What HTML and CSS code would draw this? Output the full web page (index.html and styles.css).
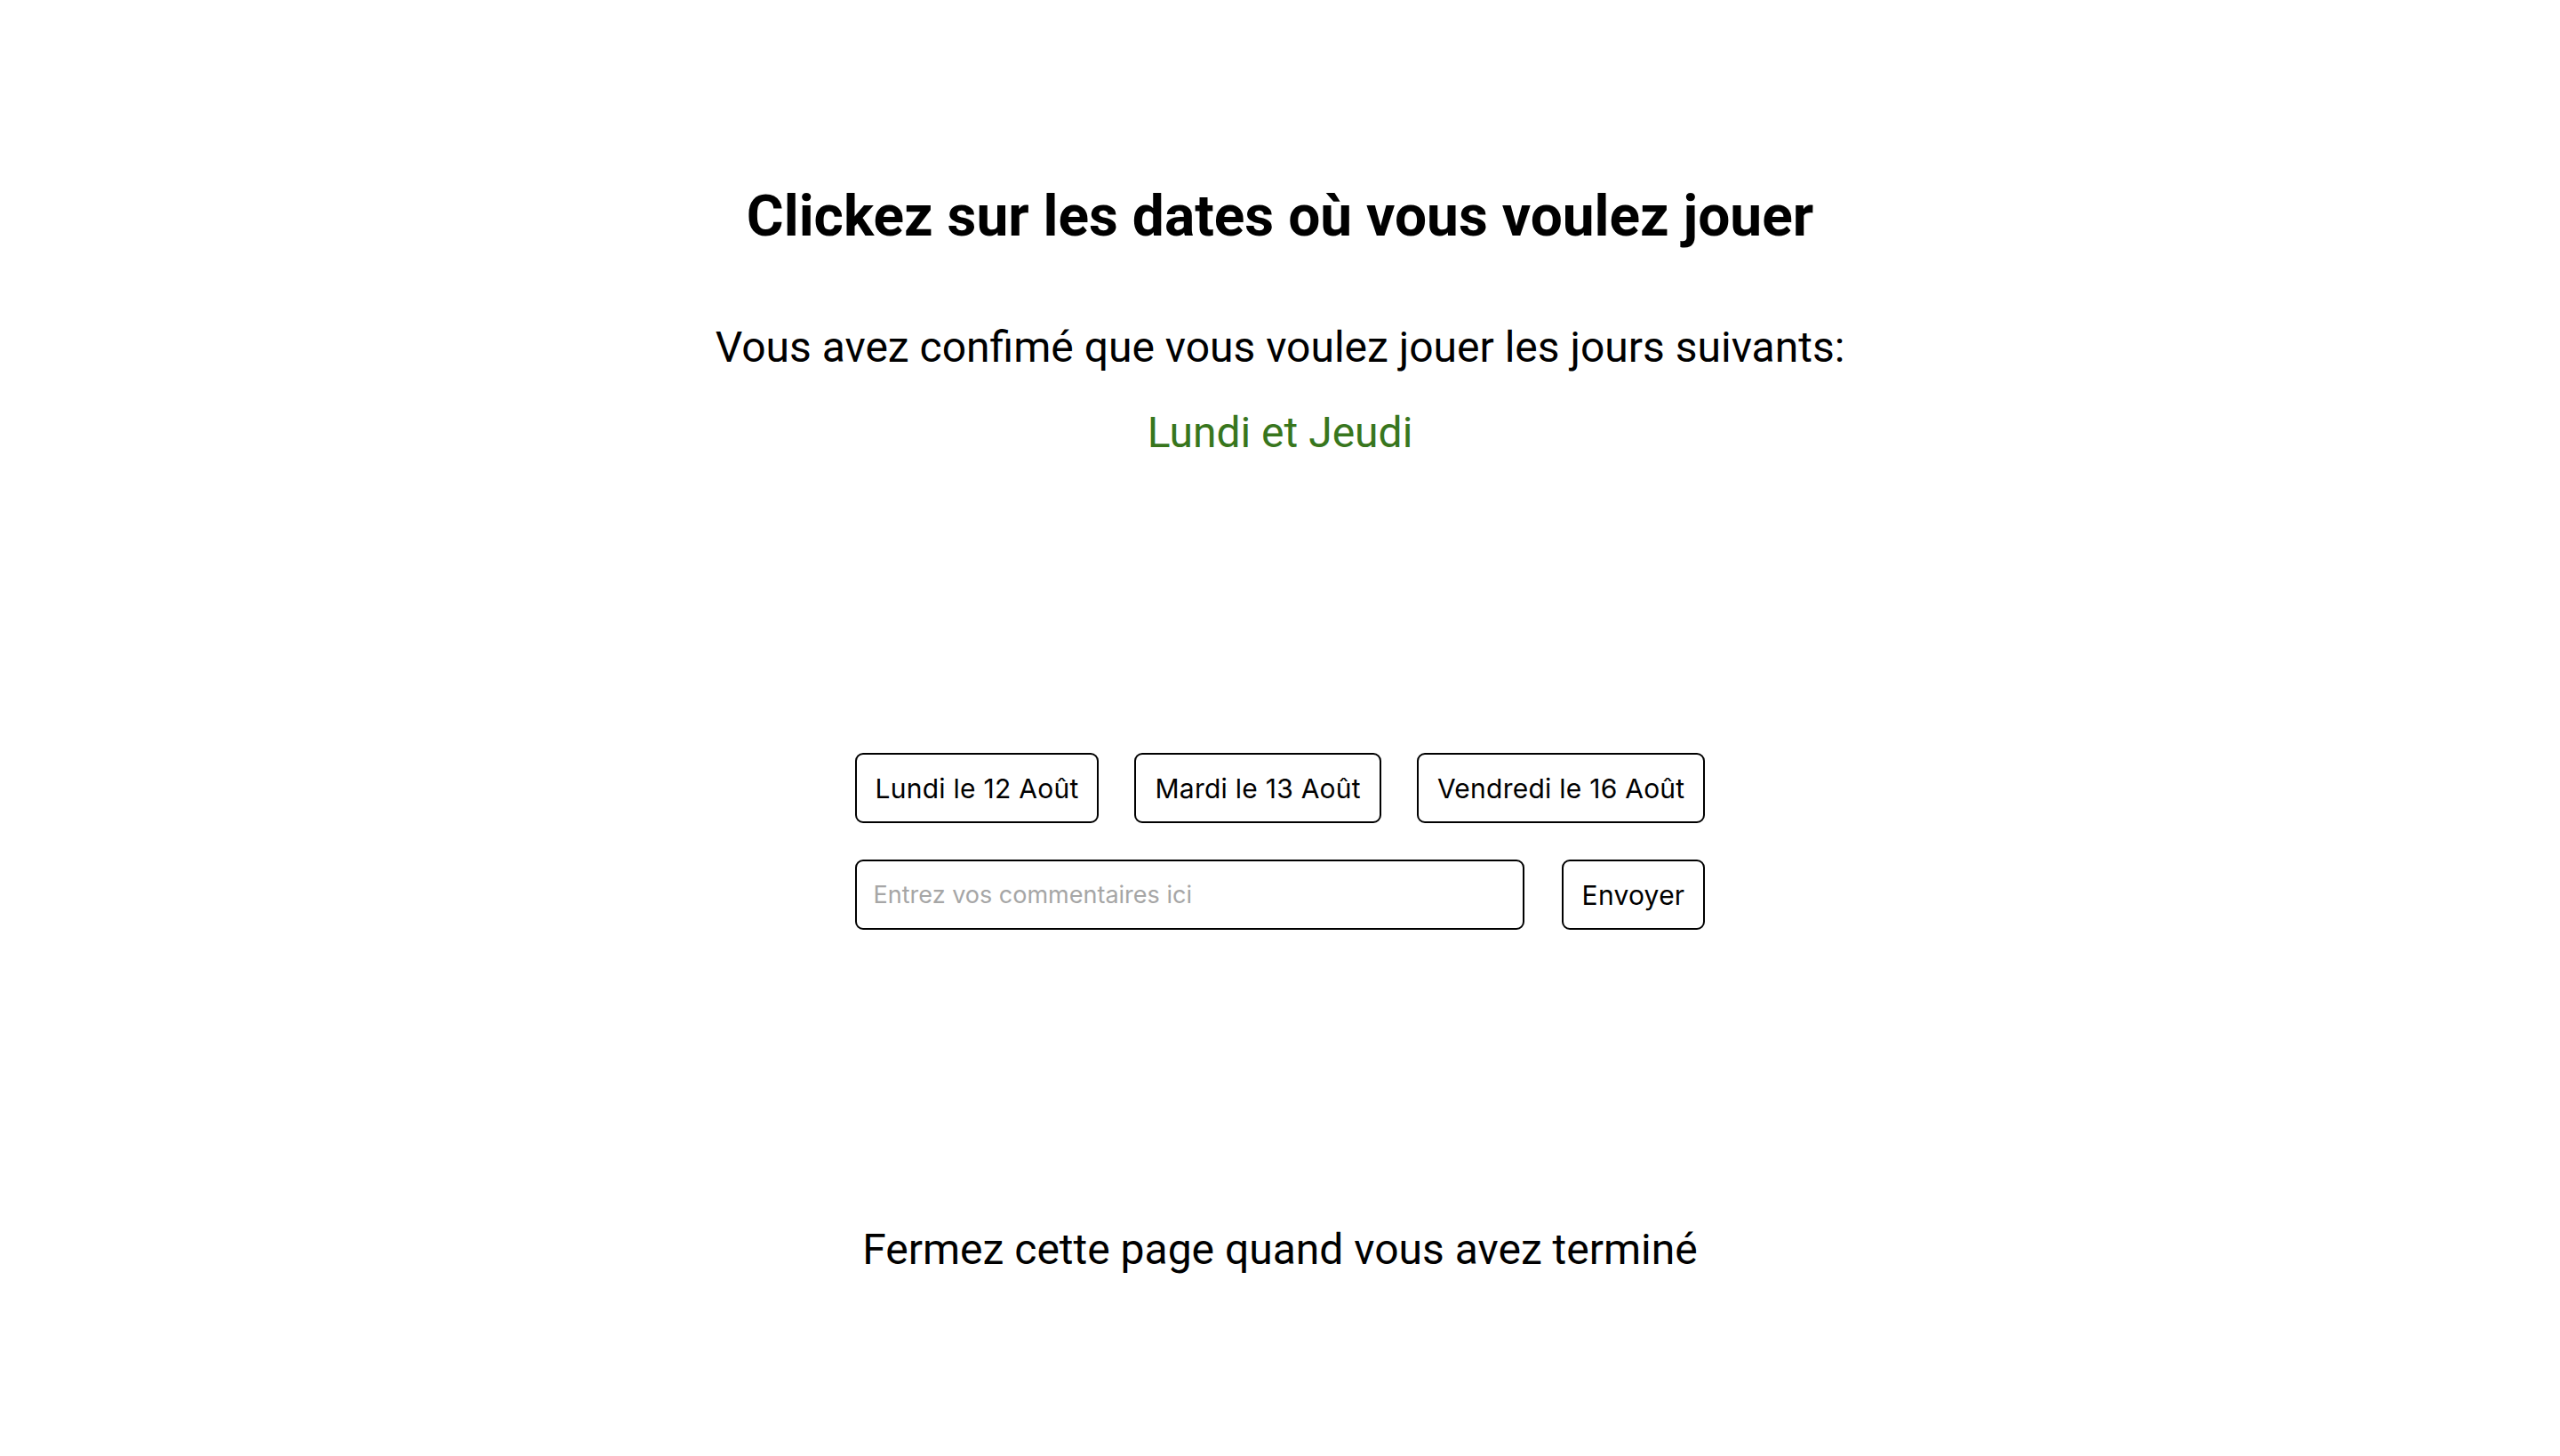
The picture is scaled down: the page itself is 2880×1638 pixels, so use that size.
FILE: index.html
```html
<!DOCTYPE html>
<html lang="fr">
<head>
<meta charset="utf-8">
<title>Dates</title>
<link rel="stylesheet" href="styles.css">
</head>
<body>
<main class="page">
  <h1 class="title">Clickez sur les dates où vous voulez jouer</h1>
  <p class="confirm">Vous avez confimé que vous voulez jouer les jours suivants:</p>
  <p class="days">Lundi et Jeudi</p>
  <div class="panel">
    <div class="dates">
      <button class="btn">Lundi le 12 Août</button>
      <button class="btn">Mardi le 13 Août</button>
      <button class="btn">Vendredi le 16 Août</button>
    </div>
    <form class="comment">
      <input class="field" type="text" placeholder="Entrez vos commentaires ici">
      <button class="btn" type="button">Envoyer</button>
    </form>
  </div>
  <p class="footer">Fermez cette page quand vous avez terminé</p>
</main>
</body>
</html>
```

FILE: styles.css
```css
html, body {
  margin: 0;
  padding: 0;
  background: #ffffff;
}

.page {
  display: flex;
  flex-direction: column;
  align-items: center;
  padding-top: 204px;
  font-family: Roboto, "Liberation Sans", sans-serif;
  color: #000;
}

.title {
  margin: 0;
  font-size: 64px;
  line-height: 80px;
  font-weight: 700;
}

.confirm {
  margin: 79px 0 0;
  font-size: 48px;
  line-height: 56px;
  font-weight: 400;
}

.days {
  margin: 40px 0 0;
  font-size: 48px;
  line-height: 56px;
  color: #38761d;
}

.panel {
  margin-top: 332px;
  display: flex;
  flex-direction: column;
  gap: 41px;
}

.dates {
  display: flex;
  gap: 40px;
}

.comment {
  display: flex;
  gap: 42px;
  margin: 0;
}

.btn {
  box-sizing: border-box;
  height: 79px;
  padding: 0 21px;
  border: 2px solid #000;
  border-radius: 9px;
  background: #fff;
  color: #000;
  font-family: Inter, "Noto Sans", sans-serif;
  font-size: 30px;
  letter-spacing: 0.25px;
  line-height: 36px;
}

.field {
  flex: 1;
  box-sizing: border-box;
  height: 79px;
  padding: 0 19px;
  border: 2px solid #000;
  border-radius: 9px;
  font-family: Inter, "Noto Sans", sans-serif;
  font-size: 27px;
  color: #000;
  outline: none;
}

.field::placeholder {
  color: #a6a6a6;
}

.footer {
  margin: 332px 0 0;
  font-size: 48px;
  line-height: 56px;
}
```
